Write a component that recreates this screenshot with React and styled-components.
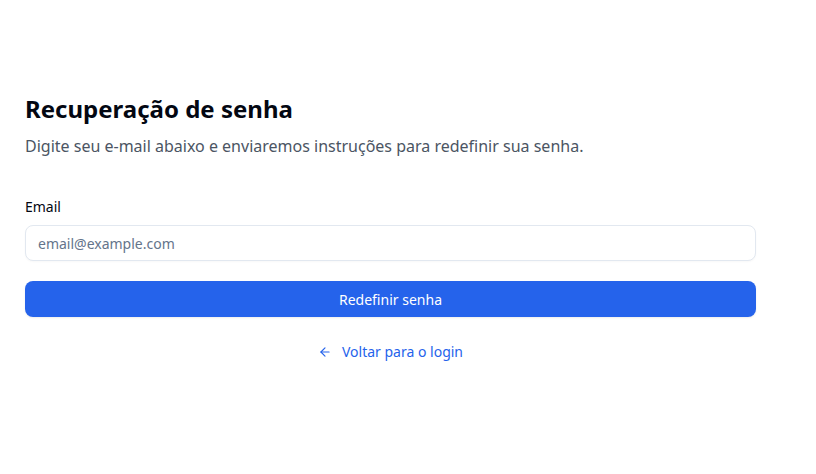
import React from "react";
import styled, { createGlobalStyle } from "styled-components";
import { ArrowLeft } from "lucide-react";

const Global = createGlobalStyle`
  html, body { margin: 0; padding: 0; background: #fff; }
  body { font-family: "Noto Sans", sans-serif; color: #030712; }
  * { box-sizing: border-box; }
`;

const Page = styled.div`
  padding: 93px 0 0 25px;
`;

const Card = styled.div`
  width: 731px;
  display: flex;
  flex-direction: column;
`;

const Title = styled.h1`
  margin: 0;
  font-size: 24px;
  line-height: 32px;
  font-weight: 700;
  color: #030712;
`;

const Subtitle = styled.p`
  margin: 9px 0 0;
  font-size: 16px;
  line-height: 24px;
  color: #4b5563;
`;

const Form = styled.form`
  margin-top: 39px;
  display: flex;
  flex-direction: column;
`;

const Label = styled.label`
  font-size: 14px;
  line-height: 20px;
  font-weight: 400;
  color: #030712;
`;

const Input = styled.input`
  margin-top: 8px;
  height: 36px;
  width: 100%;
  border: 1px solid #e2e8f0;
  border-radius: 8px;
  padding: 0 12px;
  font-family: inherit;
  font-size: 14px;
  color: #111827;
  outline: none;
  box-shadow: 0 1px 2px rgba(0,0,0,0.03);
  &::placeholder { color: #64748b; }
`;

const Button = styled.button`
  margin-top: 20px;
  height: 36px;
  width: 100%;
  border: none;
  border-radius: 8px;
  background: #2563eb;
  color: #fff;
  font-family: inherit;
  font-size: 14px;
  font-weight: 400;
  cursor: pointer;
  box-shadow: 0 1px 2px rgba(0,0,0,0.08);
`;

const LinkRow = styled.div`
  margin-top: 25px;
  display: flex;
  justify-content: center;
`;

const BackLink = styled.a`
  display: inline-flex;
  align-items: center;
  gap: 10px;
  font-size: 14px;
  line-height: 20px;
  color: #2563eb;
  text-decoration: none;
`;

export default function App() {
  return (
    <>
      <Global />
      <Page>
        <Card>
          <Title>Recuperação de senha</Title>
          <Subtitle>Digite seu e-mail abaixo e enviaremos instruções para redefinir sua senha.</Subtitle>
          <Form onSubmit={(e) => e.preventDefault()}>
            <Label htmlFor="email">Email</Label>
            <Input id="email" type="email" placeholder="email@example.com" />
            <Button type="submit">Redefinir senha</Button>
          </Form>
          <LinkRow>
            <BackLink href="#">
              <ArrowLeft size={14} strokeWidth={2} />
              Voltar para o login
            </BackLink>
          </LinkRow>
        </Card>
      </Page>
    </>
  );
}
